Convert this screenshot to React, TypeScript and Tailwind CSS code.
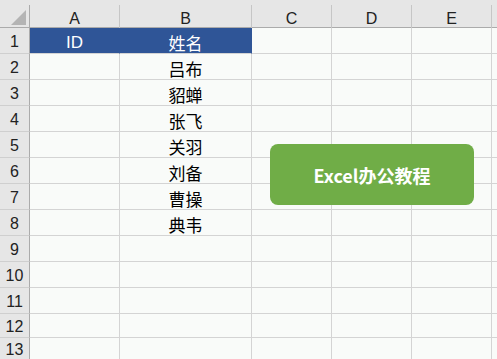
const COLS = [
  { name: 'A', w: 'w-[90px]' },
  { name: 'B', w: 'w-[132px]' },
  { name: 'C', w: 'w-[80px]' },
  { name: 'D', w: 'w-[80px]' },
  { name: 'E', w: 'w-[80px]' },
]

const NAMES = ['吕布', '貂蝉', '张飞', '关羽', '刘备', '曹操', '典韦']

const ROWS = Array.from({ length: 13 }, (_, i) => i + 1)

const FONT = "font-['Liberation_Sans','Noto_Sans_CJK_SC',sans-serif]"
const CJK = "font-['Noto_Sans_CJK_SC',sans-serif]"

function rowHeight(r: number) {
  if (r === 12) return 'h-[24px]'
  if (r === 13) return 'h-[22px]'
  return 'h-[26px]'
}

function Cell({ r, c }: { r: number; c: number }) {
  const col = COLS[c]
  const isHeadFill = r === 1 && c < 2
  let text = ''
  if (r === 1 && c === 0) text = 'ID'
  if (r === 1 && c === 1) text = '姓名'
  if (r >= 2 && r <= 8 && c === 1) text = NAMES[r - 2]

  return (
    <div
      className={`${col.w} shrink-0 border-b border-r flex items-center justify-center pt-[3px] ${
        isHeadFill
          ? 'bg-[#2F5597] border-r-[#2F5597] border-b-[#D4D4D4] text-white'
          : 'border-[#D4D4D4] text-black'
      }`}
    >
      {text && (
        <span className={`${r === 1 && c === 0 ? FONT : CJK} text-[17px] leading-none`}>{text}</span>
      )}
    </div>
  )
}

export default function App() {
  return (
    <div className={`relative w-[497px] h-[359px] overflow-hidden bg-[#F9FBF9] ${FONT}`}>
      {/* column headers */}
      <div className="flex h-[28px] bg-[#E6E6E6] border-b border-[#ABABAB]">
        <div className="w-[30px] shrink-0 flex flex-col pt-[5px]">
          <div className="flex-1 border-r border-[#ABABAB] flex items-end justify-end pr-[3px] pb-[2px]">
            <svg width="15" height="15" viewBox="0 0 15 15">
              <polygon points="0,15 15,15 15,0" fill="#B4B4B4" />
            </svg>
          </div>
        </div>
        {COLS.map((col) => (
          <div key={col.name} className={`${col.w} shrink-0 flex flex-col pt-[5px]`}>
            <div className="flex-1 border-r border-[#C6C6C6] flex items-center justify-center pt-[2px] text-[16px] text-[#222]">
              {col.name}
            </div>
          </div>
        ))}
        <div className="flex-1" />
      </div>

      {/* body */}
      {ROWS.map((r) => (
        <div key={r} className={`flex ${rowHeight(r)}`}>
          <div className="w-[30px] shrink-0 bg-[#E6E6E6] border-r border-r-[#ABABAB] border-b border-b-[#CFCFCF] flex items-center justify-center pt-[3px] text-[16px] text-[#222]">
            {r}
          </div>
          {COLS.map((_, c) => (
            <Cell key={c} r={r} c={c} />
          ))}
          <div className="flex-1 border-b border-[#D4D4D4]" />
        </div>
      ))}

      <button className="absolute left-[270px] top-[144px] w-[204px] h-[61px] rounded-[8px] bg-[#70AD47] flex items-center justify-center">
        <span className={`${CJK} text-white font-bold text-[18px] leading-none`}>Excel办公教程</span>
      </button>
    </div>
  )
}
